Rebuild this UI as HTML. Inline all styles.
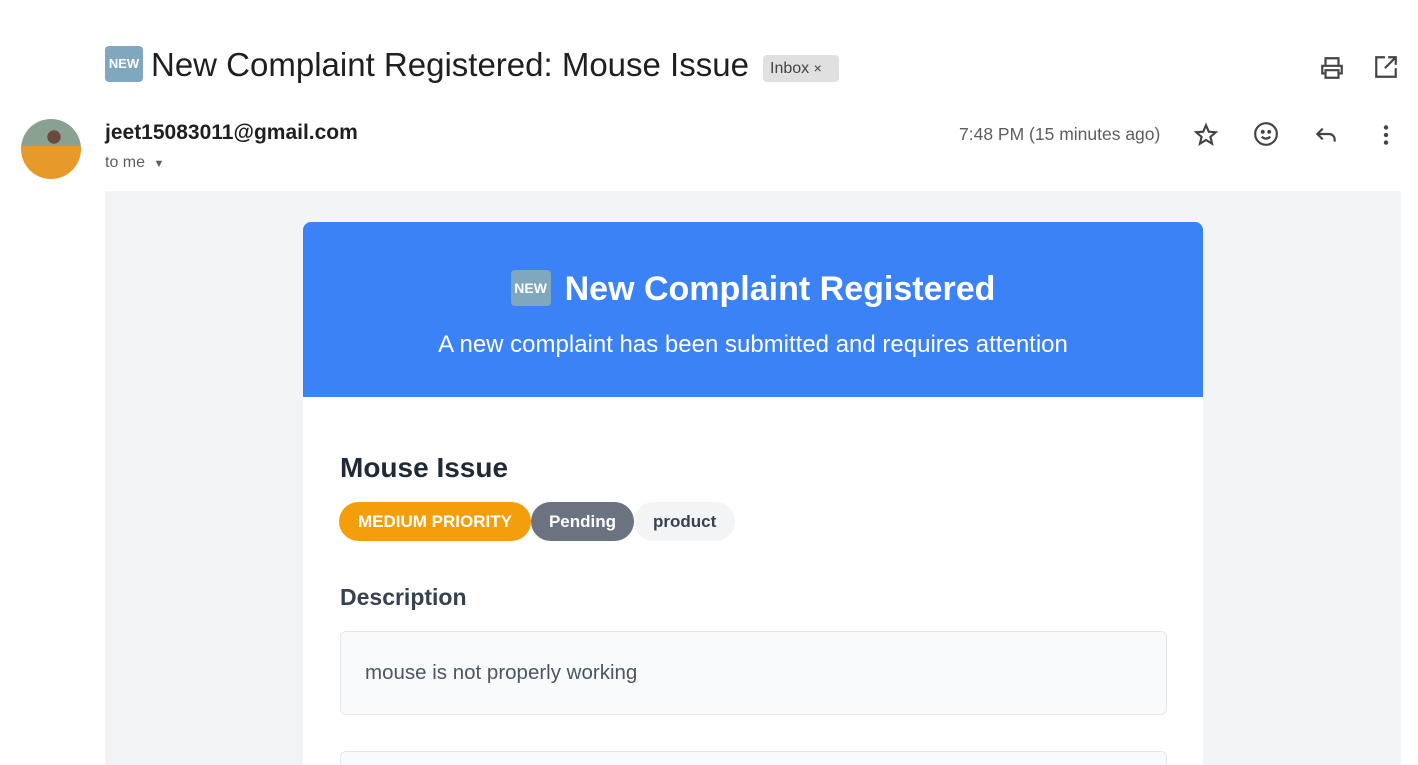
<!DOCTYPE html>
<html style="height:765px;overflow:hidden"><head><meta charset="utf-8"><style>
body{margin:0;width:1418px;height:765px;overflow:hidden;background:#fff;font-family:"Liberation Sans",Arial,sans-serif;position:relative}
.a{position:absolute}
.new{display:inline-block;background:#7fa7bd;color:#fff;font-weight:bold;border-radius:4px;text-align:center;vertical-align:middle}
svg{position:absolute}
</style></head><body>
<div class="a" style="left:105px;top:46px;font-size:33px;color:#1f1f1f;white-space:nowrap"><span class="new" style="width:38px;height:36px;line-height:36px;font-size:13px;margin-right:8px;position:relative;top:-3px">NEW</span>New Complaint Registered: Mouse Issue</div>
<div class="a" style="left:763px;top:55px;width:76px;height:27px;background:#e0e0e0;border-radius:4px;font-size:16px;line-height:27px;color:#444;text-indent:7px">Inbox <span style="font-size:14px">×</span></div>
<svg style="left:1319px;top:55px" width="26" height="26" viewBox="0 0 24 24" fill="none" stroke="#444" stroke-width="2"><path d="M6 9V3h12v6M6 17H3v-7h18v7h-3M6 14h12v7H6z"/></svg>
<svg style="left:1373px;top:54px" width="26" height="26" viewBox="0 0 24 24" fill="none" stroke="#444" stroke-width="2"><path d="M11 3H3v18h18v-8M14 3h7v7M21 3l-10 10"/></svg>
<div class="a" style="left:21px;top:119px;width:60px;height:60px;border-radius:50%;background:radial-gradient(circle at 55% 30%,#6a4a3a 0 12%,transparent 13%),linear-gradient(#8aa090 0 45%,#e79a2a 45%)"></div>
<div class="a" style="left:105px;top:121px;font-size:21px;font-weight:bold;color:#1f1f1f">jeet15083011@gmail.com</div>
<div class="a" style="left:105px;top:154px;font-size:16px;color:#5e5e5e">to me <span style="font-size:11px;margin-left:4px">▼</span></div>
<div class="a" style="left:959px;top:124px;font-size:17.5px;color:#5e5e5e">7:48 PM (15 minutes ago)</div>
<svg style="left:1193px;top:122px" width="26" height="26" viewBox="0 0 24 24" fill="none" stroke="#444" stroke-width="2"><path d="M12 3l2.6 6 6.4.5-4.9 4.2 1.5 6.3L12 16.6 6.4 20l1.5-6.3L3 9.5 9.4 9z"/></svg>
<svg style="left:1253px;top:121px" width="26" height="26" viewBox="0 0 24 24" fill="none" stroke="#444" stroke-width="2"><circle cx="12" cy="12" r="10"/><circle cx="9" cy="10" r=".8" fill="#444"/><circle cx="15" cy="10" r=".8" fill="#444"/><path d="M8 14.5q4 3.5 8 0"/></svg>
<svg style="left:1313px;top:121px" width="26" height="26" viewBox="0 0 24 24" fill="none" stroke="#444" stroke-width="2"><path d="M9 7l-5 5 5 5M4 12h11a5 5 0 015 5v2"/></svg>
<svg style="left:1373px;top:122px" width="26" height="26" viewBox="0 0 24 24" fill="#444"><circle cx="12" cy="5" r="2"/><circle cx="12" cy="12" r="2"/><circle cx="12" cy="19" r="2"/></svg>
<div class="a" style="left:105px;top:191px;width:1296px;height:574px;background:#f3f4f6"></div>
<div class="a" style="left:303px;top:222px;width:900px;height:543px;background:#fff;border-radius:8px 8px 0 0;overflow:hidden">
<div style="height:175px;background:#3b82f6;color:#fff;text-align:center">
<div style="padding-top:48px;font-size:34px;font-weight:bold"><span class="new" style="width:40px;height:36px;line-height:36px;font-size:14px;margin-right:14px;position:relative;top:-3px">NEW</span>New Complaint Registered</div>
<div style="margin-top:22px;font-size:24px">A new complaint has been submitted and requires attention</div>
</div>
<div class="a" style="left:37px;top:230px;font-size:28px;font-weight:bold;color:#1f2937">Mouse Issue</div>
<div class="a" style="left:36px;top:280px;display:flex;font-size:17px;font-weight:bold">
<span style="background:#f59e0b;color:#fff;height:39px;line-height:39px;padding:0 19px;border-radius:20px">MEDIUM PRIORITY</span>
<span style="background:#6b7280;color:#fff;height:39px;line-height:39px;padding:0 18px;border-radius:20px">Pending</span>
<span style="background:#f3f4f6;color:#374151;height:39px;line-height:39px;padding:0 19px;border-radius:20px">product</span></div>
<div class="a" style="left:37px;top:362px;font-size:23px;font-weight:bold;color:#374151">Description</div>
<div class="a" style="left:37px;top:409px;width:825px;height:82px;background:#f9fafb;border:1px solid #e5e7eb;border-radius:6px;font-size:20.5px;color:#4b5563;line-height:82px;text-indent:24px">mouse is not properly working</div>
<div class="a" style="left:37px;top:529px;width:825px;height:82px;background:#f9fafb;border:1px solid #e5e7eb;border-radius:6px"></div>
</div>
</body></html>
